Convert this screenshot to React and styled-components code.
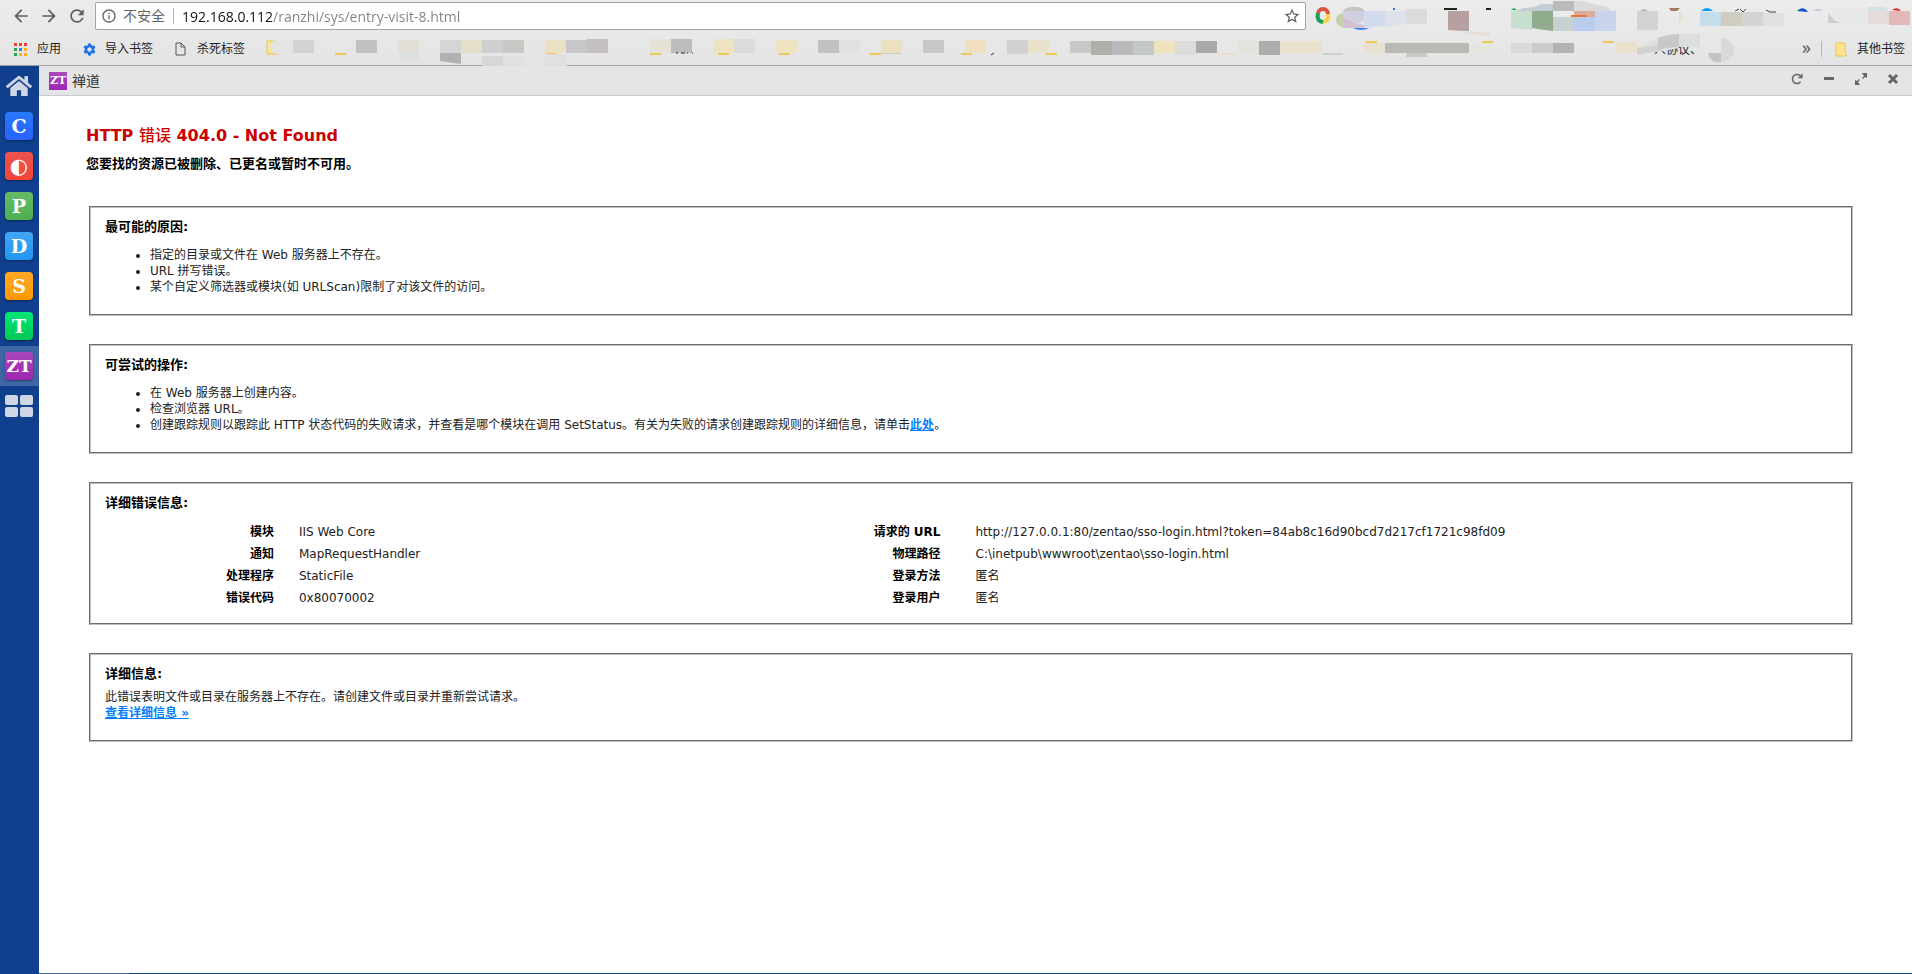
import { useState } from "react";
import styled, { createGlobalStyle } from "styled-components";
import {
  MdArrowBack,
  MdArrowForward,
  MdInfoOutline,
  MdRefresh,
  MdSettings,
  MdStarBorder,
} from "react-icons/md";
import { FaHome } from "react-icons/fa";
import { FaArrowRotateRight } from "react-icons/fa6";

const GlobalStyle = createGlobalStyle`
  * { box-sizing: border-box; }
  body {
    margin: 0;
    background: #fff;
    font-family: 'DejaVu Sans', 'Noto Sans CJK SC', sans-serif;
  }
  button { font: inherit; border: 0; padding: 0; background: none; cursor: pointer; }
  svg { display: block; }
`;

const Page = styled.div`
  min-height: 100vh;
  display: flex;
  flex-direction: column;
`;

const Browser = styled.header`
  height: 66px;
  background: linear-gradient(#ececec, #e4e4e4);
  border-bottom: 1px solid #9fa2a5;
  font-family: 'Open Sans', 'Noto Sans CJK SC', sans-serif;
`;

const NavRow = styled.div`
  display: flex;
  align-items: flex-start;
  height: 33px;
`;

const NavButtons = styled.div`
  display: flex;
  align-items: center;
  gap: 8px;
  height: 32px;
  padding: 0 8px 0 11px;
  color: #5a5d61;
`;

const NavButton = styled.button`
  color: inherit;
`;

const AddressBar = styled.div`
  flex: 1;
  min-width: 0;
  display: flex;
  align-items: center;
  height: 28px;
  margin-top: 2px;
  padding: 0 4px 0 5px;
  background: #fff;
  border: 1px solid #a2a4a6;
  border-radius: 2px;
  color: #5a5d61;
`;

const Insecure = styled.button`
  display: flex;
  align-items: center;
  gap: 6px;
  flex-shrink: 0;
  font-size: 14px;
  line-height: 16px;
  padding-right: 8px;
  color: #5f6368;
  border-right: 1px solid #b4b4b4;
`;

const AddressInput = styled.input`
  flex: 1;
  min-width: 0;
  height: 24px;
  margin-left: 8px;
  padding: 0;
  border: 0;
  outline: none;
  font-family: inherit;
  font-size: 14px;
  color: transparent;
  caret-color: #000;
  background: linear-gradient(90deg, #111 91px, #808285 91px);
  background-clip: text;
`;

const BookmarkRow = styled.nav`
  display: flex;
  align-items: center;
  height: 32px;
  padding: 0 7px 0 14px;
  font-size: 12px;
  color: #222;
`;

const Bookmark = styled.a`
  display: flex;
  align-items: center;
  gap: ${(p) => p.$gap || 8}px;
  margin-right: ${(p) => p.$after || 0}px;
  flex-shrink: 0;
  color: #222;
  text-decoration: none;
  line-height: 18px;
`;

const BookmarkOverflow = styled.button`
  margin-left: auto;
  padding: 0 10px 4px 0;
  font-size: 18px;
  line-height: 18px;
  color: #555;
`;

const Divider = styled.span`
  width: 1px;
  height: 16px;
  background: #b5b5b5;
  margin-right: 13px;
`;

const Smudge = styled.svg`
  flex-shrink: 0;
  overflow: visible;
`;

const Desktop = styled.div`
  flex: 1;
  display: flex;
`;

const Sidebar = styled.aside`
  width: 39px;
  flex-shrink: 0;
  background: #0f3f8d;
`;

const DockItem = styled.button`
  width: 100%;
  height: 40px;
  display: flex;
  align-items: center;
  justify-content: center;
  padding-right: 1px;
  color: #d0d7e4;
  background: ${(p) => (p.$active ? "#3f65a4" : "transparent")};
`;

const AppTile = styled.span`
  width: ${(p) => p.$size || 28}px;
  height: ${(p) => p.$size || 28}px;
  display: flex;
  align-items: center;
  justify-content: center;
  flex-shrink: 0;
  overflow: hidden;
  border-radius: ${(p) => (p.$size ? 0 : 4)}px;
  background: linear-gradient(${(p) => p.$from}, ${(p) => p.$to});
  box-shadow: ${(p) => (p.$size ? "none" : "0 1px 2px rgba(0, 0, 0, 0.4)")};
  color: #fff;
  font-family: ${(p) => (p.$symbol ? "'DejaVu Sans'" : "'DejaVu Serif'")}, serif;
  font-weight: ${(p) => (p.$symbol ? 400 : 700)};
  font-size: ${(p) => p.$font || 19}px;
  line-height: 1;
`;

const Tiles = styled.span`
  display: grid;
  grid-template-columns: 13px 13px;
  grid-auto-rows: 10px;
  gap: 2px;

  i {
    background: #d0d7e4;
    border-radius: 2px;
  }
`;

const Window = styled.section`
  flex: 1;
  min-width: 0;
  background: #fff;
`;

const TitleBar = styled.div`
  display: flex;
  align-items: center;
  height: 30px;
  padding: 0 12px 0 10px;
  gap: 5px;
  background: #e4e5e7;
  border-bottom: 1px solid #c8cacc;
  font-size: 14px;
  line-height: 18px;
  color: #333;
`;

const WindowButtons = styled.div`
  display: flex;
  gap: 18px;
  margin-left: auto;
  padding-bottom: 3px;
  color: #666;
`;

const WindowButton = styled.button`
  width: 14px;
  height: 18px;
  display: flex;
  align-items: center;
  justify-content: center;
  color: inherit;
`;

const ErrorHeader = styled.div`
  padding: 27px 47px 0;

  h1 {
    margin: 0 0 6px;
    font-size: 16px;
    line-height: 26px;
    color: #cc0000;
  }
  h1 span { font-weight: 500; }
  h2 {
    margin: 0;
    font-size: 13px;
    line-height: 18px;
    font-weight: 700;
    color: #000;
  }
`;

const Sections = styled.div`
  display: flex;
  flex-direction: column;
  gap: 28px;
  padding: 33px 59px 0 50px;
`;

const Box = styled.section`
  border: 2px groove #c0c0c0;
  padding: 10px 14px ${(p) => p.$bottom || 19}px;
  font-size: 12px;
  line-height: 16px;
  color: #222;

  h3 {
    margin: 0;
    font-size: 13px;
    line-height: 18px;
    color: #000;
  }
  ul {
    margin: 11px 0 0;
    padding-left: 45px;
  }
  p { margin: 6px 0 0; }
`;

const Link = styled.a`
  color: #007eff;
  font-weight: 700;
`;

const Details = styled.div`
  display: flex;
  gap: 8px;
  margin-top: 9px;
`;

const DetailTable = styled.table`
  border-collapse: collapse;
  table-layout: fixed;
  width: ${(p) => p.$width};

  th, td {
    height: 22px;
    padding: 0;
    line-height: 16px;
    vertical-align: middle;
  }
  th {
    width: ${(p) => p.$label};
    text-align: right;
    color: #000;
  }
  td { padding-left: ${(p) => p.$indent}px; }
`;

const Taskbar = styled.footer`
  height: 1px;
  background: linear-gradient(90deg, #0f3f8d 39px, #4a6a9a 39px, #4a6a9a 129px, #1b4a8a 129px);
`;

const apps = [
  { name: "C", from: "#2979ff", to: "#2962ff" },
  { name: "◐", label: "O", from: "#ef5350", to: "#f44336", symbol: true, font: 21 },
  { name: "P", from: "#66bb6a", to: "#4caf50" },
  { name: "D", from: "#42a5f5", to: "#2196f3" },
  { name: "S", from: "#ffa726", to: "#ff9800" },
  { name: "T", from: "#00e676", to: "#00c853" },
  { name: "ZT", from: "#ab47bc", to: "#9c27b0", font: 17, active: true },
];

const leftDetails = [
  ["模块", "IIS Web Core"],
  ["通知", "MapRequestHandler"],
  ["处理程序", "StaticFile"],
  ["错误代码", "0x80070002"],
];

const rightDetails = [
  ["请求的 URL", "http://127.0.0.1:80/zentao/sso-login.html?token=84ab8c16d90bcd7d217cf1721c98fd09"],
  ["物理路径", "C:\\inetpub\\wwwroot\\zentao\\sso-login.html"],
  ["登录方法", "匿名"],
  ["登录用户", "匿名"],
];

// [x, y, width, height, colour]
const bookmarkBlocks = [
  [293, 40, 21, 13, "#d2d2d2"], [356, 40, 21, 13, "#c1c1c1"], [398, 40, 21, 13, "#e2dfd6"],
  [400, 53, 19, 8, "#dfe1e1"], [440, 40, 42, 13, "#d5d5d6"], [461, 40, 21, 13, "#e6dfc8"],
  [482, 40, 21, 13, "#cfcfcf"], [503, 40, 21, 13, "#c7c9c4"], [524, 40, 21, 13, "#e6e6e6"],
  [545, 40, 21, 13, "#ebe2c4"], [566, 40, 21, 13, "#c7c7ca"], [587, 39, 21, 14, "#c4c0c4"],
  [482, 56, 21, 14, "#d6d8d7"], [503, 56, 21, 14, "#dee1e0"], [524, 55, 21, 14, "#e4e4e4"],
  [545, 54, 22, 16, "#dfe0e2"],
  [650, 39, 21, 14, "#e5e2d5"], [671, 39, 21, 14, "#bcbcbc"], [713, 39, 21, 14, "#eee3c0"],
  [734, 39, 21, 14, "#dbdbda"], [776, 40, 21, 13, "#ede3bf"], [818, 40, 21, 13, "#c1c3c1"],
  [839, 40, 21, 13, "#e0e2e1"], [881, 40, 21, 13, "#ebe1c0"], [881, 53, 21, 1, "#c9c9c9"],
  [923, 40, 21, 13, "#c9c6c7"], [965, 40, 21, 13, "#efe1bf"], [1007, 40, 21, 14, "#d1d1d0"],
  [1028, 40, 21, 13, "#e9e2cb"], [1070, 41, 21, 12, "#c8c8c8"], [1091, 41, 21, 14, "#afaea9"],
  [1112, 41, 21, 14, "#b9b9bb"], [1133, 41, 21, 14, "#c5c8c8"], [1154, 41, 21, 12, "#efe3bb"],
  [1175, 41, 21, 14, "#dcdddb"], [1196, 41, 21, 12, "#a7a9ab"], [1238, 41, 21, 12, "#e4e3dd"],
  [1217, 53, 21, 2, "#e8e0c4"], [1259, 41, 21, 14, "#adadab"], [1280, 41, 21, 12, "#e9e1cc"],
  [1301, 41, 21, 12, "#e9e1ce"], [1322, 53, 21, 2, "#cfcfcf"], [1364, 43, 21, 10, "#e7e2d0"],
  [1385, 43, 84, 10, "#bab9b6"], [1406, 53, 21, 4, "#cac8c8"], [1469, 43, 21, 10, "#e7e5df"],
  [1511, 43, 21, 10, "#d9d9d9"], [1532, 43, 21, 10, "#c9cbcc"], [1553, 43, 21, 10, "#b5b2af"],
  [1616, 42, 21, 11, "#e9e1cc"],
];

const folderEdges = [
  [335, 53], [546, 53], [650, 53], [718, 53], [779, 53], [870, 53], [961, 53], [1046, 53],
  [1366, 41], [1482, 41], [1603, 41],
];

const BookmarkSmudge = () => (
  <Smudge width="1470" height="32" viewBox="266 33 1470 32" aria-hidden="true">
    <path d="M267 41h12v13h-12z" fill="#fde692" stroke="#e8c547" />
    <path d="M276 39h20v15h-20q-6-2-6-7t6-8z" fill="#e4e4e2" />
    {folderEdges.map(([x, y]) => (
      <rect key={x} x={x} y={y} width="11" height="2" fill="#ecc955" />
    ))}
    {bookmarkBlocks.map(([x, y, w, h, fill]) => (
      <rect key={`${x}-${y}`} x={x} y={y} width={w} height={h} fill={fill} />
    ))}
    <path d="M440 53h21v11l-21-3z" fill="#b1b1b3" />
    <path d="M676 53h2m3 0h4m2 0h1m4 0h1M991 55l3-2" stroke="#222" />
    <text x="1654" y="54" fontSize="12" fill="#222">人协议、</text>
    <path d="M1637 47q12-4 22-11v11l18-1 2 2-20 4h-22z" fill="#e0e0df" />
    <path d="M1637 48l21-3v6l-21 4z" fill="#d2d2d0" />
    <path d="M1658 38q11-4 21-4v13l-15 1-6 3z" fill="#c8c8c9" />
    <path d="M1679 34h21v13h-21z" fill="#dbdedc" />
    <path d="M1721 38a13 12 0 0 1 0 24z" fill="#d9d9d8" />
    <path d="M1708 53h13v9q-11 2-13-9z" fill="#c6c3c4" />
  </Smudge>
);

const ExtensionSmudge = () => (
  <Smudge width="606" height="33" viewBox="1306 0 606 33" aria-hidden="true">
    <g fill="none" strokeWidth="4">
      <path d="M1318 14a5 5 0 0 1 10 0" stroke="#de5145" />
      <path d="M1328 14q1 7-5 8" stroke="#fcce41" />
      <path d="M1318 13q-2 8 5 9" stroke="#1ba15f" />
    </g>
    <circle cx="1343" cy="20" r="7" fill="#c5cfac" />
    <path d="M1343 11q4-5 14-4 5 0 8 4z" fill="#c5c5c5" />
    <path d="M1343 11h21v10l-14 6h-7z" fill="#d0cee0" />
    <path d="M1343 19q8 1 11 4l10 2v3h-21z" fill="#d1bfd2" />
    <path d="M1364 11h21v15l-21 2z" fill="#d2dbed" />
    <path d="M1385 11h21v13q-10 2-21 3z" fill="#dee1ea" />
    <path d="M1406 9h21v15h-21z" fill="#dbdbdb" />
    <path d="M1353 28h16q-3 2-8 2t-8-2z" fill="#4285f4" />
    <path d="M1393 9h2" stroke="#2979e8" strokeWidth="2" />
    <path d="M1444 9h13m29 0h5" stroke="#222" strokeWidth="2" />
    <path d="M1448 11h21v20q-10 0-21-1z" fill="#b6a0a0" />
    <path d="M1460 32h30v4q-15 0-30-4z" fill="#e5e1d2" />
    <path d="M1511 10l3-2 3 2z" fill="#0fa92f" />
    <path d="M1516 11l8-3q10 0 17-4h12v7z" fill="#c6cdd2" />
    <path d="M1511 11h21v19l-21-2z" fill="#c7dfcf" />
    <path d="M1532 11h21v20q-10-1-21-3z" fill="#91ac8d" />
    <path d="M1553 1h21v10h-21z" fill="#b9bbbc" />
    <path d="M1574 1q13 0 22 4 12 0 16 6h-38z" fill="#dadada" />
    <path d="M1553 17h21v14h-21z" fill="#c6d1cf" />
    <path d="M1555 16q8-3 16-1z" fill="#f0eeee" />
    <path d="M1574 11h21v6h-21z" fill="#d9ab9d" />
    <path d="M1571 15h16v2h-16z" fill="#e97936" />
    <path d="M1574 17h21v14h-21z" fill="#b9cceb" />
    <path d="M1595 11h21v20h-21z" fill="#cad5ed" />
    <path d="M1637 11h21v19h-21z" fill="#d3d3d3" />
    <path d="M1640 11q5-4 8 0z" fill="#b8b8b8" />
    <path d="M1669 8h11l-3 3h-6z" fill="#a3785e" />
    <path d="M1679 11l4 6-4 7z" fill="#e8dfcb" />
    <path d="M1701 11q6-6 12 0z" fill="#079df2" />
    <path d="M1700 12h21v14h-21z" fill="#c5dcea" />
    <path d="M1721 12h21v14h-21z" fill="#cfccc0" />
    <path d="M1742 12h21v14h-21z" fill="#d5d4d2" />
    <path d="M1763 13h21v13h-21z" fill="#e0e0e0" />
    <path d="M1735 11l4-2m1 0l3 3 3-3M1766 10l4 2h6" stroke="#444" fill="none" />
    <path d="M1797 11q6-6 11 1z" fill="#0f51c8" />
    <path d="M1812 11q6-4 11 0z" fill="#c2cbe0" />
    <path d="M1828 13v10h13l-7-3z" fill="#cecece" />
    <path d="M1830 8h38v16l-28-2z" fill="#e6e8ea" />
    <path d="M1868 7h17l5 6h-22z" fill="#d5e0e8" />
    <path d="M1868 11h21v13h-21z" fill="#e6dcdb" />
    <path d="M1892 10q5-4 9 1z" fill="#d3201f" />
    <path d="M1889 11h21v14h-21z" fill="#e2b9b8" />
  </Smudge>
);

const AppsGrid = () => (
  <svg width="13" height="13" viewBox="0 0 13 13" aria-hidden="true">
    {["#f03e35", "#f03e35", "#f03e35", "#22a257", "#2c83f6", "#fbaf18", "#22a257", "#fbaf18", "#fbaf18"].map(
      (fill, i) => (
        <rect key={i} x={(i % 3) * 5} y={Math.floor(i / 3) * 5} width="3" height="3" fill={fill} />
      )
    )}
  </svg>
);

const PageIcon = () => (
  <svg width="11" height="14" viewBox="0 0 11 14" fill="none" stroke="#555" aria-hidden="true">
    <path d="M1 1h5l4 4v8H1zM6 1v4h4" />
  </svg>
);

const FolderIcon = () => (
  <svg width="12" height="15" viewBox="0 0 12 15" aria-hidden="true">
    <path d="M1 1h9v9l1 1v3H1z" fill="#fee492" stroke="#ebc44c" />
  </svg>
);

const Tile = ({ app, size, font }) => (
  <AppTile $from={app.from} $to={app.to} $symbol={app.symbol} $font={font || app.font} $size={size}>
    {app.name}
  </AppTile>
);

const DetailRows = ({ rows, ...props }) => (
  <DetailTable {...props}>
    <tbody>
      {rows.map(([label, value]) => (
        <tr key={label}>
          <th scope="row">{label}</th>
          <td>{value}</td>
        </tr>
      ))}
    </tbody>
  </DetailTable>
);

const App = () => {
  const [address, setAddress] = useState("192.168.0.112/ranzhi/sys/entry-visit-8.html");

  return (
    <Page>
      <GlobalStyle />
      <Browser>
        <NavRow>
          <NavButtons>
            <NavButton aria-label="后退"><MdArrowBack size={20} /></NavButton>
            <NavButton aria-label="前进"><MdArrowForward size={20} /></NavButton>
            <NavButton aria-label="刷新"><MdRefresh size={20} /></NavButton>
          </NavButtons>
          <AddressBar>
            <Insecure><MdInfoOutline size={16} /> 不安全</Insecure>
            <AddressInput
              aria-label="地址"
              value={address}
              onChange={(e) => setAddress(e.target.value)}
            />
            <NavButton aria-label="收藏"><MdStarBorder size={18} /></NavButton>
          </AddressBar>
          <ExtensionSmudge />
        </NavRow>
        <BookmarkRow>
          <Bookmark href="#apps" $gap={10} $after={21}><AppsGrid /> 应用</Bookmark>
          <Bookmark href="#import" $gap={8} $after={22}><MdSettings size={15} color="#1a73e8" /> 导入书签</Bookmark>
          <Bookmark href="#kill" $gap={11} $after={21}><PageIcon /> 杀死标签</Bookmark>
          <BookmarkSmudge />
          <BookmarkOverflow aria-label="更多书签">»</BookmarkOverflow>
          <Divider />
          <Bookmark href="#other" $gap={10}><FolderIcon /> 其他书签</Bookmark>
        </BookmarkRow>
      </Browser>

      <Desktop>
        <Sidebar>
          <DockItem aria-label="主页"><FaHome size={26} /></DockItem>
          {apps.map((app) => (
            <DockItem key={app.name} $active={app.active} aria-label={app.label || app.name}>
              <Tile app={app} />
            </DockItem>
          ))}
          <DockItem aria-label="全部应用">
            <Tiles><i /><i /><i /><i /></Tiles>
          </DockItem>
        </Sidebar>

        <Window>
          <TitleBar>
            <Tile app={apps[6]} size={18} font={11} />
            禅道
            <WindowButtons>
              <WindowButton aria-label="刷新"><FaArrowRotateRight size={12} /></WindowButton>
              <WindowButton aria-label="最小化">
                <svg width="12" height="12" viewBox="0 0 12 12"><path d="M1 4h10v3H1z" fill="currentColor" /></svg>
              </WindowButton>
              <WindowButton aria-label="最大化">
                <svg width="12" height="12" viewBox="0 0 12 12" fill="currentColor">
                  <path d="M7 0h5v5l-2-1-2 2-1-1 2-2zM0 7l2 1 2-2 1 1-2 2 2 3H0z" />
                </svg>
              </WindowButton>
              <WindowButton aria-label="关闭">
                <svg width="12" height="12" viewBox="0 0 12 12"><path d="M2 2l8 8M10 2l-8 8" stroke="currentColor" strokeWidth="3" /></svg>
              </WindowButton>
            </WindowButtons>
          </TitleBar>

          <ErrorHeader>
            <h1>HTTP <span>错误</span> 404.0 - Not Found</h1>
            <h2>您要找的资源已被删除、已更名或暂时不可用。</h2>
          </ErrorHeader>

          <Sections>
            <Box>
              <h3>最可能的原因:</h3>
              <ul>
                <li>指定的目录或文件在 Web 服务器上不存在。</li>
                <li>URL 拼写错误。</li>
                <li>某个自定义筛选器或模块(如 URLScan)限制了对该文件的访问。</li>
              </ul>
            </Box>
            <Box>
              <h3>可尝试的操作:</h3>
              <ul>
                <li>在 Web 服务器上创建内容。</li>
                <li>检查浏览器 URL。</li>
                <li>
                  创建跟踪规则以跟踪此 HTTP 状态代码的失败请求，并查看是哪个模块在调用
                  SetStatus。有关为失败的请求创建跟踪规则的详细信息，请单击<Link href="#trace">此处</Link>。
                </li>
              </ul>
            </Box>
            <Box $bottom={14}>
              <h3>详细错误信息:</h3>
              <Details>
                <DetailRows rows={leftDetails} $width="35%" $label="28%" $indent={25} />
                <DetailRows rows={rightDetails} $width="65%" $label="20%" $indent={35} />
              </Details>
            </Box>
            <Box>
              <h3>详细信息:</h3>
              <p>此错误表明文件或目录在服务器上不存在。请创建文件或目录并重新尝试请求。</p>
              <Link href="#more">查看详细信息 »</Link>
            </Box>
          </Sections>
        </Window>
      </Desktop>
      <Taskbar />
    </Page>
  );
};

export default App;
